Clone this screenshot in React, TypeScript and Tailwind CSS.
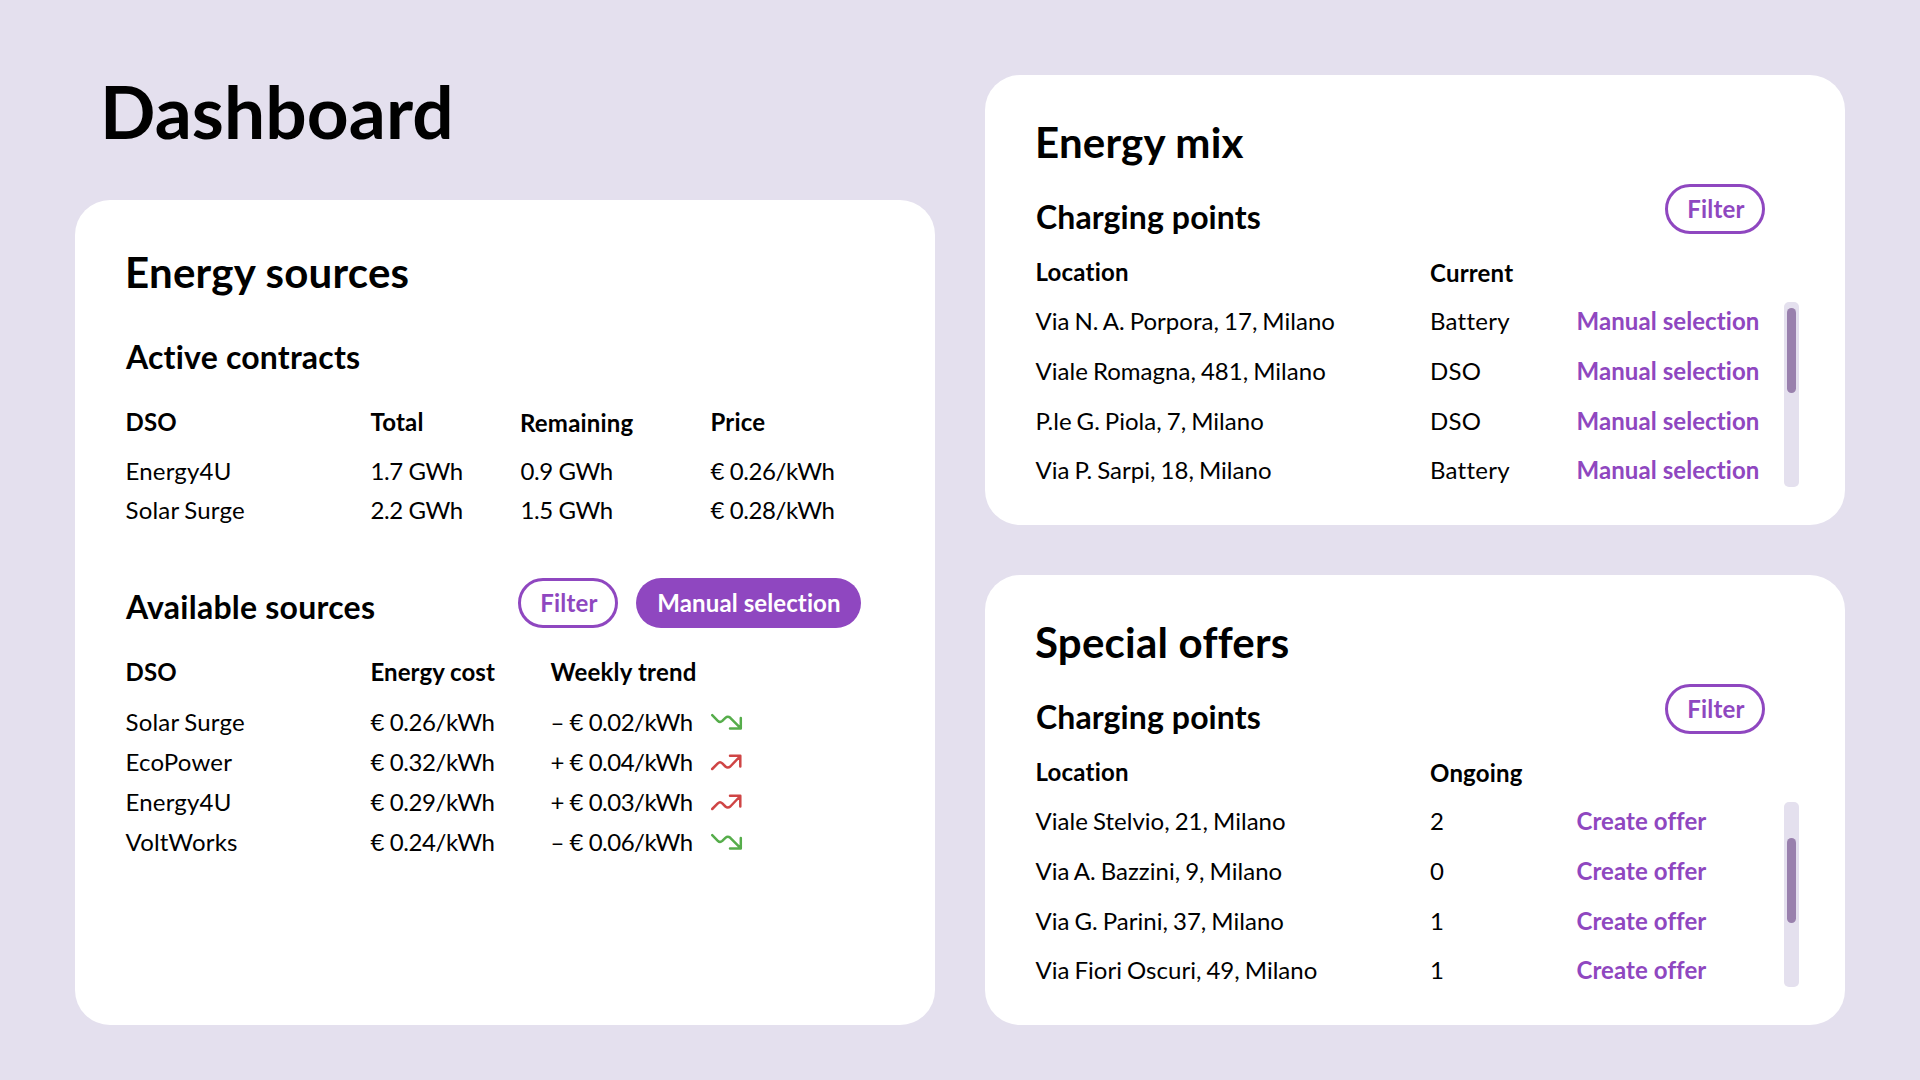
import React from "react";

type Trend = "up" | "down";

const contracts = [
  ["Energy4U", "1.7 GWh", "0.9 GWh", "€ 0.26/kWh"],
  ["Solar Surge", "2.2 GWh", "1.5 GWh", "€ 0.28/kWh"],
];

const sources: { dso: string; cost: string; weekly: string; trend: Trend }[] = [
  { dso: "Solar Surge", cost: "€ 0.26/kWh", weekly: "– € 0.02/kWh", trend: "down" },
  { dso: "EcoPower", cost: "€ 0.32/kWh", weekly: "+ € 0.04/kWh", trend: "up" },
  { dso: "Energy4U", cost: "€ 0.29/kWh", weekly: "+ € 0.03/kWh", trend: "up" },
  { dso: "VoltWorks", cost: "€ 0.24/kWh", weekly: "– € 0.06/kWh", trend: "down" },
];

const mixRows = [
  ["Via N. A. Porpora, 17, Milano", "Battery"],
  ["Viale Romagna, 481, Milano", "DSO"],
  ["P.le G. Piola, 7, Milano", "DSO"],
  ["Via P. Sarpi, 18, Milano", "Battery"],
];

const offerRows = [
  ["Viale Stelvio, 21, Milano", "2"],
  ["Via A. Bazzini, 9, Milano", "0"],
  ["Via G. Parini, 37, Milano", "1"],
  ["Via Fiori Oscuri, 49, Milano", "1"],
];

function TrendIcon({ trend }: { trend: Trend }) {
  const down = trend === "down";
  return (
    <svg
      width="34"
      height="20"
      viewBox="0 0 34 20"
      fill="none"
      stroke={down ? "#56ad4b" : "#cf4545"}
      strokeWidth="2.5"
      strokeLinecap="round"
      strokeLinejoin="round"
      className="block"
    >
      {down ? (
        <path d="M2.2 3.2L7.8 8.8Q10 11 12.3 8.9L15.4 5.8Q17.8 3.6 20.3 5.8L30.8 16.3M30.8 6V16.5H20" />
      ) : (
        <path d="M2.2 17L7.8 11.4Q10 9.2 12.3 11.4L15.4 14.5Q17.8 16.6 20.3 14.5L30.3 4M20 3.8H30.3V14.5" />
      )}
    </svg>
  );
}

function FilterButton() {
  return (
    <button className="h-[50px] w-[100px] rounded-full border-[3px] border-[#8f47c0] pb-px pl-[2px] font-bold leading-[42px] tracking-[0.2px] text-[#8f47c0]">
      Filter
    </button>
  );
}

function PointsCard(props: {
  title: string;
  column: string;
  rows: string[][];
  action: string;
  thumb: string;
}) {
  return (
    <section className="h-[450px] rounded-[35px] bg-white pl-[50px] pr-[46px] pt-[41px]">
      <h2 className="text-[42px] font-bold leading-[52px] tracking-[0.22px]">{props.title}</h2>
      <div className="mt-[16px] flex h-[50px] items-start justify-between pr-[34px]">
        <h3 className="pl-px pt-[13px] text-[32px] font-bold leading-[40px] tracking-[0.1px]">Charging points</h3>
        <FilterButton />
      </div>
      <div className="mt-[18px] grid grid-cols-[394.5px_1fr] pl-[0.5px] font-bold leading-[40px] tracking-[0.2px]">
        <div>Location</div>
        <div className="pt-px">{props.column}</div>
      </div>
      <div className="mt-[9px] flex h-[185px] justify-between">
        <div className="flex flex-col gap-[11.75px] pl-[0.5px]">
          {props.rows.map(([place, value]) => (
            <div key={place} className="grid grid-cols-[394.5px_146.5px_200px] leading-[38px]">
              <div className="tracking-[0.03px] [word-spacing:-1.2px]">{place}</div>
              <div className="tracking-[0.25px]">{value}</div>
              <button className="text-left font-bold tracking-[0.08px] text-[#8f47c0]">{props.action}</button>
            </div>
          ))}
        </div>
        <div className="h-[185px] w-[15px] rounded-[5px] bg-[#e4e0ee] px-[3px]">
          <div className={`h-[85px] w-[9px] rounded-full bg-[#9980ad] ${props.thumb}`} />
        </div>
      </div>
    </section>
  );
}

export default function App() {
  return (
    <main className="flex h-[1080px] w-[1920px] gap-[50px] overflow-hidden bg-[#e4e0ee] p-[75px] pb-[55px] font-['Lato',sans-serif] text-[24px] text-black [font-variant-ligatures:none]">
      <div className="w-[860px]">
        <h1 className="h-[125px] pl-[25px] text-[73px] font-bold leading-[72px] tracking-[0.1px]">Dashboard</h1>
        <section className="h-[825px] rounded-[35px] bg-white pl-[50px] pr-[74px] pt-[46px]">
          <h2 className="text-[42px] font-bold leading-[52px] tracking-[0.25px]">Energy sources</h2>

          <h3 className="mt-[39px] pl-px text-[32px] font-bold leading-[40px] tracking-[0.2px]">Active contracts</h3>
          <div className="mt-[25px] grid grid-cols-[245px_149.5px_190.5px_1fr] pl-[0.5px] font-bold leading-[40px] tracking-[0.2px]">
            <div>DSO</div>
            <div>Total</div>
            <div className="h-[40px] pt-px">Remaining</div>
            <div>Price</div>
          </div>
          <div className="mt-[9px] pl-[0.5px]">
            {contracts.map(([dso, ...values]) => (
              <div key={dso} className="grid grid-cols-[245px_150px_190px_1fr] leading-[39px]">
                <div className="tracking-[0.2px] [word-spacing:-1px]">{dso}</div>
                {values.map((value) => (
                  <div key={value} className="tracking-[-0.42px]">{value}</div>
                ))}
              </div>
            ))}
          </div>

          <div className="mt-[49px] flex h-[50px] items-start">
            <h3 className="w-[393px] pl-px pt-[9px] text-[32px] font-bold leading-[40px] tracking-[0.24px]">
              Available sources
            </h3>
            <div className="flex gap-[18px]">
              <FilterButton />
              <button className="h-[50px] w-[225px] rounded-full bg-[#8f47c0] pl-px font-bold leading-[48px] tracking-[0.1px] text-white">
                Manual selection
              </button>
            </div>
          </div>
          <div className="mt-[24px] grid grid-cols-[245px_180px_1fr] pl-[0.5px] font-bold leading-[40px] tracking-[0.2px]">
            <div>DSO</div>
            <div className="tracking-[0.05px]">Energy cost</div>
            <div>Weekly trend</div>
          </div>
          <div className="mt-[10px] pl-[0.5px]">
            {sources.map((s) => (
              <div key={s.dso} className="grid grid-cols-[245px_180px_159.5px_1fr] items-center leading-[40px]">
                <div className="tracking-[0.2px] [word-spacing:-1px]">{s.dso}</div>
                <div className="tracking-[-0.42px]">{s.cost}</div>
                <div className="tracking-[-0.5px]">{s.weekly}</div>
                <TrendIcon trend={s.trend} />
              </div>
            ))}
          </div>
        </section>
      </div>

      <div className="flex w-[860px] flex-col gap-[50px]">
        <PointsCard title="Energy mix" column="Current" rows={mixRows} action="Manual selection" thumb="mt-[6px]" />
        <PointsCard title="Special offers" column="Ongoing" rows={offerRows} action="Create offer" thumb="mt-[36px]" />
      </div>
    </main>
  );
}
